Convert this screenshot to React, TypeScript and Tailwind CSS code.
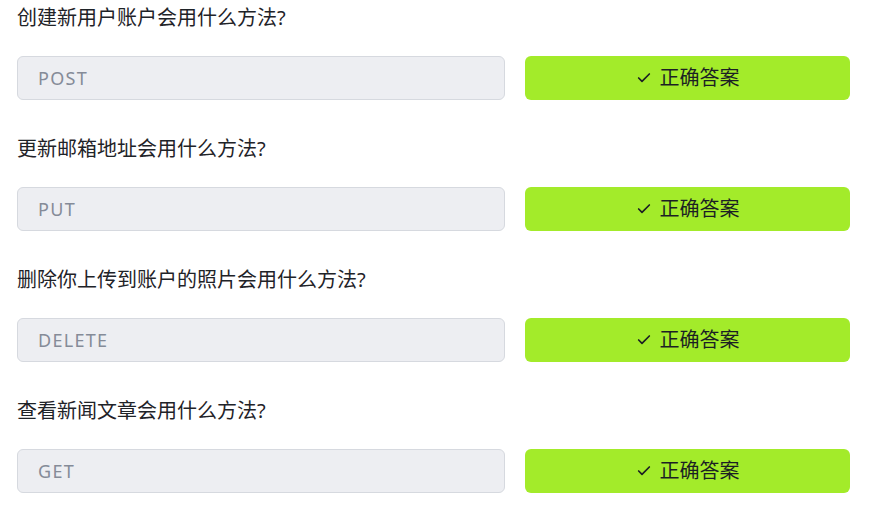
import { Check } from "lucide-react";

const questions = [
  { q: "创建新用户账户会用什么方法?", method: "POST" },
  { q: "更新邮箱地址会用什么方法?", method: "PUT" },
  { q: "删除你上传到账户的照片会用什么方法?", method: "DELETE" },
  { q: "查看新闻文章会用什么方法?", method: "GET" },
];

export default function App() {
  return (
    <div
      className="w-[873px] h-[518px] bg-white px-[17px] pt-[4px]"
      style={{ fontFamily: '"Noto Sans", "Noto Sans CJK SC", sans-serif' }}
    >
      <div className="w-[833px] flex flex-col gap-[35px]">
        {questions.map((item) => (
          <div key={item.method} className="flex flex-col gap-[24px]">
            <p className="text-[20px] leading-[28px] text-[#1f2328]">{item.q}</p>
            <div className="flex gap-5">
              <div className="w-[488px] h-[44px] rounded-md border border-[#d6d9df] bg-[#edeef2] flex items-center px-5 text-[18px] tracking-[1.3px] text-[#858b98]">
                {item.method}
              </div>
              <button className="w-[325px] h-[44px] rounded-md bg-[#a3eb2a] flex items-center justify-center gap-2 text-[20px] text-[#1c1f24]">
                <Check className="w-4 h-4" strokeWidth={2.5} />
                正确答案
              </button>
            </div>
          </div>
        ))}
      </div>
    </div>
  );
}
